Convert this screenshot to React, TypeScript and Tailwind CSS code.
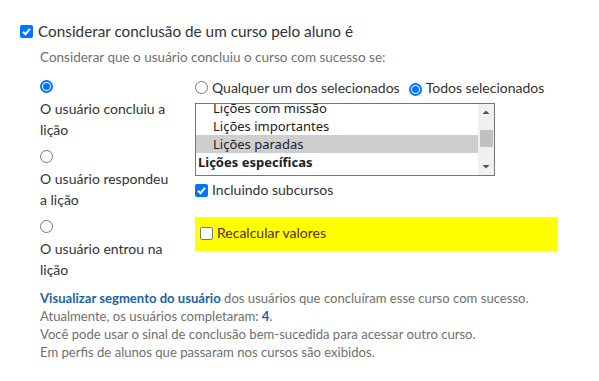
import type React from "react";

const font = { fontFamily: "'Lato', 'Open Sans', sans-serif" };

const CheckBox: React.FC<{ checked?: boolean }> = ({ checked }) =>
  checked ? (
    <span className="inline-flex h-[13px] w-[13px] shrink-0 items-center justify-center rounded-[2px] bg-[#0075ff]">
      <svg width="11" height="11" viewBox="0 0 11 11">
        <path d="M2 5.8 L4.4 8.2 L9 2.8" stroke="white" strokeWidth="2" fill="none" />
      </svg>
    </span>
  ) : (
    <span className="inline-block h-[13px] w-[13px] shrink-0 rounded-[2px] border border-[#767676] bg-white" />
  );

const Radio: React.FC<{ checked?: boolean }> = ({ checked }) =>
  checked ? (
    <span className="inline-flex h-[13px] w-[13px] shrink-0 items-center justify-center rounded-full border-2 border-[#0075ff] bg-white">
      <span className="h-[7px] w-[7px] rounded-full bg-[#0075ff]" />
    </span>
  ) : (
    <span className="inline-block h-[13px] w-[13px] shrink-0 rounded-full border border-[#767676] bg-white" />
  );

const LeftOption: React.FC<{ checked?: boolean; lines: string[] }> = ({ checked, lines }) => (
  <div className="flex flex-col">
    <div className="flex h-[14px] items-center">
      <Radio checked={checked} />
    </div>
    <div className="mt-[5px] text-[14px] leading-[21px] text-[#333]">
      {lines.map((l) => (
        <div key={l}>{l}</div>
      ))}
    </div>
  </div>
);

export default function App() {
  const listFont = { fontFamily: "'Noto Sans', 'DejaVu Sans', sans-serif" };
  return (
    <div className="h-[381px] w-[599px] overflow-hidden bg-white" style={font}>
      <div className="flex items-center gap-[5px] pl-[20px] pt-[23px]">
        <CheckBox checked />
        <span className="text-[15.3px] leading-[16px] text-[#333]">
          Considerar conclusão de um curso pelo aluno é
        </span>
      </div>

      <div className="pl-[40px]">
        <div className="mt-[10px] text-[13.5px] leading-[16px] text-[#707070]">
          Considerar que o usuário concluiu o curso com sucesso se:
        </div>

        <div className="mt-[14px] flex">
          <div className="flex w-[155px] flex-col gap-[9px]">
            <LeftOption checked lines={["O usuário concluiu a", "lição"]} />
            <LeftOption lines={["O usuário respondeu", "a lição"]} />
            <LeftOption lines={["O usuário entrou na", "lição"]} />
          </div>

          <div className="flex flex-col">
            <div className="flex h-[16px] items-center text-[14px] text-[#333]">
              <Radio />
              <span className="ml-[4px]">Qualquer um dos selecionados</span>
              <span className="ml-[9px]">
                <Radio checked />
              </span>
              <span className="ml-[4px]">Todos selecionados</span>
            </div>

            <div className="mt-[8px] flex h-[73px] w-[300px] border border-[#767676] bg-white" style={listFont}>
              <div className="flex-1 overflow-hidden">
                <div className="-mt-[5px] text-[13px] leading-[18px] text-[#222]">
                  <div className="pl-[17px]">Lições com missão</div>
                  <div className="pl-[17px]">Lições importantes</div>
                  <div className="bg-[#cecece] pl-[17px]">Lições paradas</div>
                  <div className="pl-[2px] font-bold">Lições específicas</div>
                  <div className="pl-[17px]">Lições legais</div>
                </div>
              </div>
              <div className="flex w-[16px] flex-col items-center bg-[#f0f0f0]">
                <svg width="16" height="16" viewBox="0 0 16 16">
                  <path d="M4.5 10 L8 6.5 L11.5 10 Z" fill="#505050" />
                </svg>
                <div className="mt-[10px] h-[17px] w-[13px] bg-[#c1c1c1]" />
                <div className="flex-1" />
                <svg width="16" height="16" viewBox="0 0 16 16">
                  <path d="M4.5 6 L8 9.5 L11.5 6 Z" fill="#505050" />
                </svg>
              </div>
            </div>

            <div className="mt-[6px] flex h-[16px] items-center gap-[4px] text-[14px] leading-[16px] text-[#333]">
              <CheckBox checked />
              <span>Incluindo subcursos</span>
            </div>

            <div className="mt-[19px] flex h-[34px] w-[363px] items-center gap-[4px] bg-[#ffff00] pb-[2px] pl-[5px]">
              <CheckBox />
              <span className="text-[14px] leading-[16px] text-[#5a2a12]">Recalcular valores</span>
            </div>
          </div>
        </div>

        <div className="mt-[9px] text-[13.1px] leading-[18px] text-[#707070]">
          <div>
            <span className="font-bold text-[#1b63a8]">Visualizar segmento do usuário</span> dos usuários que
            concluíram esse curso com sucesso.
          </div>
          <div>
            Atualmente, os usuários completaram: <span className="font-bold text-[#1b63a8]">4</span>.
          </div>
          <div>Você pode usar o sinal de conclusão bem-sucedida para acessar outro curso.</div>
          <div>Em perfis de alunos que passaram nos cursos são exibidos.</div>
        </div>
      </div>
    </div>
  );
}
